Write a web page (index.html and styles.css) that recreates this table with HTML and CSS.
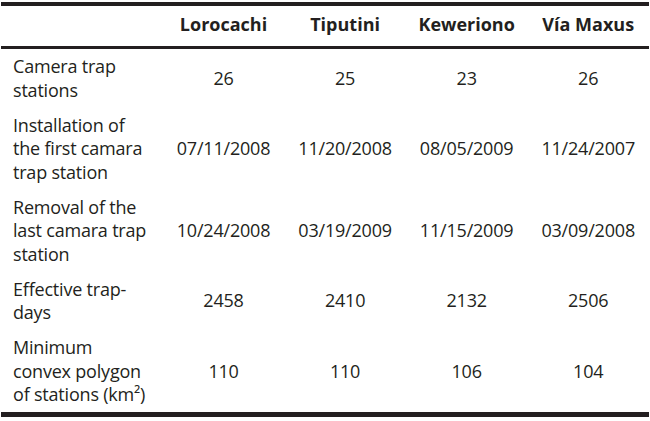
FILE: index.html
```html
<!DOCTYPE html>
<html>
<head>
<meta charset="utf-8">
<link rel="stylesheet" href="styles.css">
</head>
<body>
<table class="data">
  <colgroup>
    <col class="c-label">
    <col class="c-val">
    <col class="c-val">
    <col class="c-val">
    <col class="c-val">
  </colgroup>
  <thead>
    <tr>
      <th></th>
      <th>Lorocachi</th>
      <th>Tiputini</th>
      <th>Keweriono</th>
      <th>Vía Maxus</th>
    </tr>
  </thead>
  <tbody>
    <tr class="r2">
      <td class="label">Camera trap<br>stations</td>
      <td>26</td>
      <td>25</td>
      <td>23</td>
      <td>26</td>
    </tr>
    <tr class="r3">
      <td class="label">Installation of<br>the first camara<br>trap station</td>
      <td>07/11/2008</td>
      <td>11/20/2008</td>
      <td>08/05/2009</td>
      <td>11/24/2007</td>
    </tr>
    <tr class="r3">
      <td class="label">Removal of the<br>last camara trap<br>station</td>
      <td>10/24/2008</td>
      <td>03/19/2009</td>
      <td>11/15/2009</td>
      <td>03/09/2008</td>
    </tr>
    <tr class="r2">
      <td class="label">Effective trap-<br>days</td>
      <td>2458</td>
      <td>2410</td>
      <td>2132</td>
      <td>2506</td>
    </tr>
    <tr class="r3">
      <td class="label">Minimum<br>convex polygon<br>of stations (km²)</td>
      <td>110</td>
      <td>110</td>
      <td>106</td>
      <td>104</td>
    </tr>
  </tbody>
</table>
</body>
</html>
```

FILE: styles.css
```css
html, body {
  margin: 0;
  padding: 0;
  background: #ffffff;
}

body {
  padding: 2px 1px 0 1px;
  font-family: "Open Sans", "Liberation Sans", sans-serif;
  color: #231f20;
}

.data {
  width: 648px;
  border-collapse: collapse;
  table-layout: fixed;
  font-size: 18px;
  line-height: 23.5px;
  letter-spacing: -0.2px;
}

.c-label {
  width: 161px;
}

.c-val {
  width: 121px;
}

.data thead tr {
  border-top: 4px solid #231f20;
  border-bottom: 3px solid #231f20;
}

.data th {
  height: 37px;
  padding: 0 0 3px 0;
  font-weight: 700;
  font-size: 18px;
  letter-spacing: 0;
  text-align: center;
  vertical-align: middle;
  white-space: nowrap;
}

.data tbody tr:last-child {
  border-bottom: 5px solid #231f20;
}

.data td {
  padding: 6px 0 5.5px 0;
  text-align: center;
  vertical-align: middle;
  white-space: nowrap;
}

.data td.label {
  text-align: left;
  padding-left: 12px;
}
```
